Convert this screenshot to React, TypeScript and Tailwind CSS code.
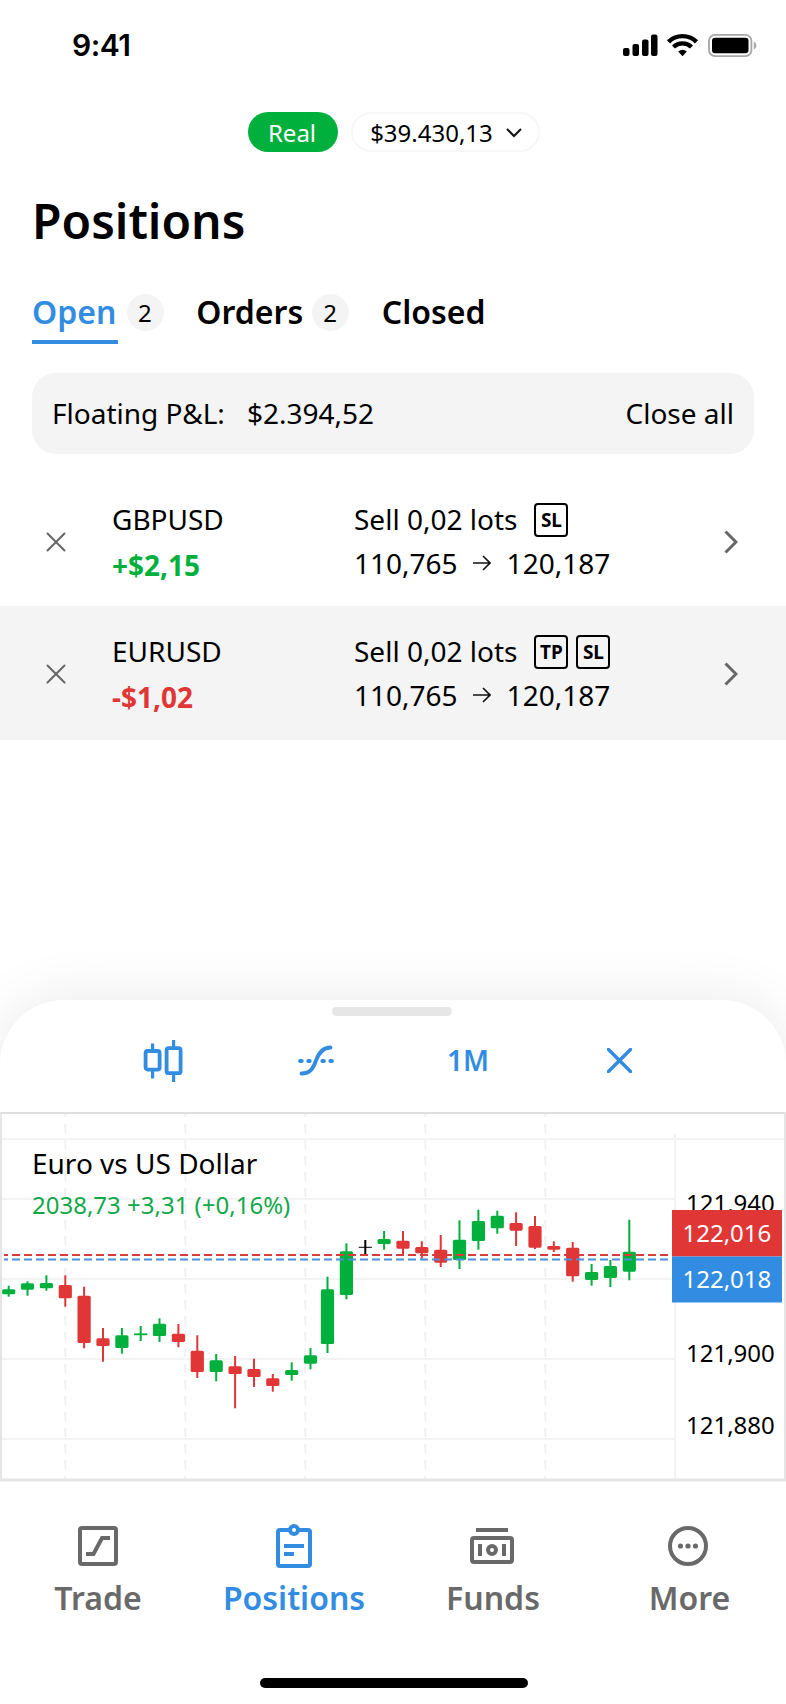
import React, { useState } from "react";

const GREEN = "#00b03c";
const RED = "#e03636";

// [x, high, bodyTop, bodyBottom, low, color]
const candles: [number, number, number, number, number, string][] = [
  [8.7, 173.7, 177.3, 182.3, 184.7, GREEN],
  [27.5, 169.3, 171.3, 177.7, 183.7, GREEN],
  [46.4, 163.3, 171, 176.3, 178.7, GREEN],
  [65.3, 163.3, 173, 186.3, 194.7, RED],
  [84.1, 174.7, 183.7, 231, 236.3, RED],
  [103, 216, 226.3, 234, 249.7, RED],
  [121.9, 216, 223.3, 236, 241.7, GREEN],
  [140.7, 214, 221.4, 223.2, 229, GREEN],
  [159.5, 206.3, 211.7, 224, 230, GREEN],
  [178.4, 212, 221.7, 230, 235.3, RED],
  [197.3, 223.3, 238.7, 260, 266, RED],
  [216.2, 242, 248.3, 260, 269.3, GREEN],
  [235.1, 244, 254.3, 262, 296.3, RED],
  [254, 246.7, 257, 265, 275, RED],
  [272.8, 262, 266.3, 274, 279.7, RED],
  [291.7, 250.3, 258, 263, 268.7, GREEN],
  [310.5, 236, 243.3, 251.7, 257.3, GREEN],
  [327.5, 164.7, 177.3, 232, 241, GREEN],
  [346.4, 131.3, 139.3, 183, 187.3, GREEN],
  [365.3, 128, 134.8, 135.8, 142, "#000000"],
  [384.1, 119, 127, 132, 137.7, GREEN],
  [403, 119, 128.7, 136.7, 142, RED],
  [421.8, 129.3, 135, 141.3, 146.7, RED],
  [440.7, 123, 137.7, 150.7, 155, RED],
  [459.5, 108.3, 127.7, 148, 157, GREEN],
  [478.4, 97.7, 109, 129, 137.7, GREEN],
  [497.3, 98.7, 103.7, 116.3, 121.7, GREEN],
  [516.1, 100.3, 111, 118.7, 134, RED],
  [535, 104, 114, 135.7, 137, RED],
  [553.8, 129.3, 134, 137.7, 140, RED],
  [572.7, 130, 135.7, 164.3, 169.7, RED],
  [591.6, 152, 160, 168, 173.7, GREEN],
  [610.4, 148, 154, 166, 175, GREEN],
  [629.3, 107.7, 139.7, 159.7, 168.3, GREEN],
];

const positions = [
  { symbol: "GBPUSD", pnl: "+$2,15", up: true, tags: ["SL"] },
  { symbol: "EURUSD", pnl: "-$1,02", up: false, tags: ["TP", "SL"] },
];

const tabs = [
  { name: "Open", count: 2 },
  { name: "Orders", count: 2 },
  { name: "Closed", count: 0 },
];

function StatusBar() {
  return (
    <div className="flex h-[90px] items-center justify-between pl-[72px] pr-[30px]">
      <span className="font-['Inter'] text-[30px] font-semibold leading-none tracking-[-0.5px]">9:41</span>
      <svg width="134" height="26" viewBox="0 0 134 26" className="mt-0.5 overflow-visible">
        <g>
          <rect x="1" y="15" width="6.5" height="8" rx="2" />
          <rect x="10.5" y="11" width="6.5" height="12" rx="2" />
          <rect x="20" y="6.5" width="6.5" height="16.5" rx="2" />
          <rect x="29" y="1.5" width="6.5" height="21.5" rx="2" />
        </g>
        <g fill="none" stroke="#000" strokeWidth="4.4">
          <path d="M46.5 8.8 C54.3 1.2 66.7 1.2 74.5 8.8" />
          <path d="M51.5 14 C56.7 9.2 64.3 9.2 69.5 14" />
        </g>
        <path d="M56.2 18.6 Q60.5 14.8 64.8 18.6 L60.5 23.2 Z" />
        <rect x="87" y="1.8" width="42.4" height="21.4" rx="6" fill="none" stroke="#a6a6a6" strokeWidth="1.8" />
        <rect x="90" y="4.8" width="36.5" height="15.4" rx="3" />
        <path d="M131.8 8.5 Q134.4 10 134.4 12.5 Q134.4 15 131.8 16.5 Z" fill="#a6a6a6" />
      </svg>
    </div>
  );
}

function Cross({ size, color, width }: { size: number; color: string; width: number }) {
  return (
    <svg width={size} height={size} viewBox={`0 0 ${size} ${size}`} stroke={color} strokeWidth={width} strokeLinecap="round">
      <path d={`M1.5 1.5 L${size - 1.5} ${size - 1.5} M${size - 1.5} 1.5 L1.5 ${size - 1.5}`} />
    </svg>
  );
}

function Chart() {
  return (
    <svg width="786" height="370" viewBox="0 0 786 370" className="block font-['Noto_Sans',sans-serif]">
      {/* grid */}
      <g stroke="#f3f3f3" strokeWidth="2">
        <path d="M0 27 H786 M0 87 H675 M0 167 H675 M0 247 H675 M0 327 H675" />
        <path d="M675 22 V368" />
      </g>
      <g stroke="#ededed" strokeWidth="1.6" strokeDasharray="9 7" strokeDashoffset="4">
        {[65.3, 185.3, 305.3, 425.3, 545.3].map((x) => (
          <path key={x} d={`M${x} 0 V368`} />
        ))}
      </g>
      <path d="M0 1 H786" stroke="#dedede" strokeWidth="2" />
      <path d="M0 368 H786" stroke="#e5e5e5" strokeWidth="3" />
      <path d="M1 0 V368 M785 0 V368" stroke="#e5e5e5" strokeWidth="2" />

      {candles.map(([x, high, top, bottom, low, color]) => (
        <g key={x} fill={color}>
          <rect x={x - 1} y={high} width="2" height={low - high} />
          <rect x={x - 6.6} y={top} width="13.2" height={bottom - top} rx={bottom - top > 2 ? 1.6 : 0} />
        </g>
      ))}

      {/* ask / bid */}
      <g fill="none" strokeWidth="2" strokeDasharray="8 4" strokeDashoffset="4">
        <path d="M4 143 H670" stroke="#d93a3a" />
        <path d="M4 147.5 H670" stroke="#4a8fdc" />
      </g>

      <text x="32" y="62" fontSize="28">Euro vs US Dollar</text>
      <text x="32" y="102" fontSize="24" fill="#12a84a">2038,73 +3,31 (+0,16%)</text>

      <g fontSize="24">
        <text x="686" y="100">121,940</text>
        <text x="686" y="250.4">121,900</text>
        <text x="686" y="322.4">121,880</text>
        <rect x="672" y="98" width="110" height="46.5" fill="#e03636" />
        <rect x="672" y="144.5" width="110" height="46" fill="#318ce2" />
        <text x="682.5" y="130" fill="#fff">122,016</text>
        <text x="682.5" y="175.5" fill="#fff">122,018</text>
      </g>
    </svg>
  );
}

export default function App() {
  const [activeTab, setActiveTab] = useState("Open");

  return (
    <div className="flex h-[1704px] w-[786px] flex-col overflow-hidden bg-white font-['Noto_Sans',sans-serif] text-black">
      <StatusBar />

      {/* account switcher */}
      <div className="mt-[22px] flex justify-center gap-[13px] pl-0.5 text-2xl">
        <span className="flex h-10 w-[90px] items-center justify-center rounded-full bg-[#00b03c] pr-0.5 pt-px text-white">Real</span>
        <button className="flex h-10 w-[189px] items-center justify-center gap-[13px] rounded-full border-2 border-[#f7f7f7] pl-px pt-0.5">
          $39.430,13
          <svg width="16" height="10" viewBox="0 0 16 10" fill="none" stroke="#111" strokeWidth="2">
            <path d="M1 1 L8 8 L15 1" />
          </svg>
        </button>
      </div>

      <h1 className="mt-[36px] px-8 text-[48px] font-semibold leading-[66px]">Positions</h1>

      <div className="mt-[35px] flex h-[55px] px-8">
        {tabs.map((tab) => (
          <button key={tab.name} onClick={() => setActiveTab(tab.name)} className="mr-[32.5px] flex items-start">
            <span
              className={
                activeTab === tab.name
                  ? "h-[55px] border-b-4 border-[#318ce2] pr-[1.5px] text-[32px] font-semibold leading-[46px] text-[#318ce2]"
                  : "h-[55px] text-[32px] font-semibold leading-[46px]"
              }
            >
              {tab.name}
            </span>
            {tab.count > 0 && (
              <span className="ml-[9px] mt-[5px] flex size-[37px] items-center justify-center rounded-full bg-[#f4f4f4] pr-px text-2xl">
                {tab.count}
              </span>
            )}
          </button>
        ))}
      </div>

      <div className="mx-8 mt-[29px] flex h-[81px] items-center rounded-3xl bg-[#f4f4f4] px-5 pb-0.5 text-[28px]">
        <span>Floating P&amp;L:</span>
        <span className="ml-[22px]">$2.394,52</span>
        <button className="ml-auto">Close all</button>
      </div>

      <div className="mt-[20px]">
        {positions.map((p) => (
          <div
            key={p.symbol}
            className="flex h-[132px] items-center pl-[46px] pr-[48px] pt-1 text-[28px] even:h-[134px] even:bg-[#f4f4f4] even:pb-0.5"
          >
            <Cross size={20} color="#666" width={2} />
            <div className="ml-[46px] w-[242px]">
              <p className="leading-[46px]">{p.symbol}</p>
              <p className={p.up ? "font-bold leading-[46px] text-[#00b03c]" : "font-bold leading-[46px] text-[#e03636]"}>{p.pnl}</p>
            </div>
            <div className="pb-0.5">
              <p className="flex h-[44px] items-center">
                Sell 0,02 lots
                <span className="ml-[17px] mt-0.5 flex gap-2">
                  {p.tags.map((tag) => (
                    <span key={tag} className="flex size-[34px] items-center justify-center rounded-[4px] border-2 border-black text-[19px] font-bold">
                      {tag}
                    </span>
                  ))}
                </span>
              </p>
              <p className="flex h-[44px] items-center">
                110,765
                <svg width="18" height="16" viewBox="0 0 18 16" fill="none" stroke="#111" strokeWidth="1.6" className="ml-[15px] mr-[16px]">
                  <path d="M0 8 H17 M10 1 L17 8 L10 15" />
                </svg>
                120,187
              </p>
            </div>
            <svg width="14" height="24" viewBox="0 0 14 24" fill="none" stroke="#666" strokeWidth="3" className="ml-auto">
              <path d="M1.5 1.5 L12 12 L1.5 22.5" />
            </svg>
          </div>
        ))}
      </div>

      {/* chart sheet */}
      <div className="mt-auto flex h-[482px] flex-col rounded-t-[64px] bg-white shadow-[0_0_60px_rgba(0,0,0,0.09)]">
        <div className="ml-[332px] mt-[7px] h-[9px] w-[120px] rounded-full bg-[#e6e6e6]" />
        <div className="mb-2 flex h-[88px] items-center pl-[142px] text-[#318ce2]">
          <svg width="42" height="44" viewBox="0 0 42 44" fill="none" stroke="currentColor" strokeWidth="3.8">
            <rect x="3.6" y="13" width="14" height="18.6" rx="2" />
            <rect x="24.6" y="10.2" width="14" height="25" rx="2" />
            <path d="M10.6 5.5 V12 M10.6 33 V40.5 M31.6 2 V10 M31.6 36 V44" strokeWidth="3.2" />
          </svg>
          <svg width="38" height="32" viewBox="0 0 38 32" fill="none" stroke="currentColor" strokeWidth="3.8" strokeLinecap="round" className="ml-[113px]">
            <path d="M4.5 29.5 C13 29.5 16 25 19 16.5 S26 3.5 33.5 3.5" />
            <path d="M3 17 H4.8 M11.2 17 H12.8 M25.3 17 H27 M33.3 17 H35" />
          </svg>
          <span className="ml-[112px] text-[28px] font-semibold">1M</span>
          <span className="ml-[118px]">
            <Cross size={25} color="#318ce2" width={3.5} />
          </span>
        </div>
        <Chart />
      </div>

      <nav className="flex h-[222px] flex-col bg-white text-[#696969]">
        <div className="flex pt-[42px] text-[32px] font-semibold leading-[44px]">
          <div className="flex w-[196px] flex-col items-center gap-2">
            <svg width="44" height="44" viewBox="0 0 44 44" fill="none" stroke="currentColor" strokeWidth="4">
              <rect x="4" y="4" width="36" height="36" rx="2" />
              <path d="M10 30 H17.5 L26 14 H34" />
            </svg>
            Trade
          </div>
          <div className="flex w-[196px] flex-col items-center gap-2 text-[#318ce2]">
            <svg width="44" height="44" viewBox="0 0 44 44" fill="none" stroke="currentColor" strokeWidth="4">
              <path d="M17 6 H8 Q6 6 6 8 V40 Q6 42 8 42 H36 Q38 42 38 40 V8 Q38 6 36 6 H27" />
              <circle cx="22" cy="6" r="4" />
              <path d="M12 22 H32 M12 30 H22" />
            </svg>
            Positions
          </div>
          <div className="flex w-[202px] flex-col items-center gap-2">
            <svg width="44" height="44" viewBox="0 0 44 44" fill="none" stroke="currentColor" strokeWidth="4" className="mr-0.5">
              <rect x="2" y="14" width="40" height="24" rx="2" />
              <path d="M6 6 H38 M10 20 V32 M34 20 V32" />
              <circle cx="22" cy="26" r="4" />
            </svg>
            Funds
          </div>
          <div className="flex w-[191px] flex-col items-center gap-2">
            <svg width="44" height="44" viewBox="0 0 44 44" fill="none" stroke="currentColor" strokeWidth="4" className="mr-[3px]">
              <circle cx="22" cy="22" r="18" />
              <g fill="currentColor" stroke="none">
                <circle cx="14.5" cy="22" r="2.6" />
                <circle cx="22" cy="22" r="2.6" />
                <circle cx="29.5" cy="22" r="2.6" />
              </g>
            </svg>
            More
          </div>
        </div>
        <div className="mb-4 ml-[260px] mt-auto h-[10px] w-[268px] rounded-full bg-black" />
      </nav>
    </div>
  );
}
